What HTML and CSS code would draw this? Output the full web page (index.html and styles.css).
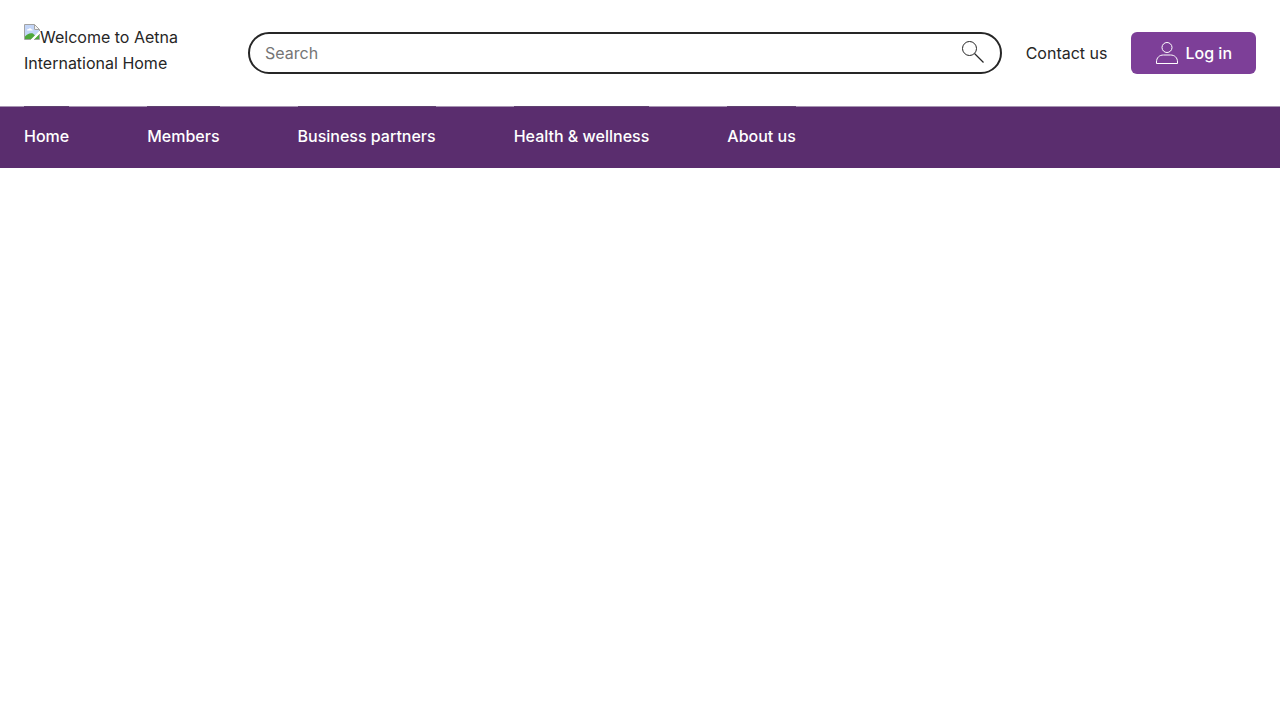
FILE: index.html
```html
<!DOCTYPE html>
<html lang="en">
<head>
    <meta charset="UTF-8">
    <meta name="viewport" content="width=device-width, initial-scale=1.0">
    <title>Aetna International</title>
    <link rel="stylesheet" href="styles.css">
</head>
<body>
    <header class="header">
        <a class="logo" href="#"><svg class="logo-icon" width="16" height="16" viewBox="0 0 16 16" aria-hidden="true">
                <path d="M.5.5h10l5 5v10H.5z" fill="#fff"/>
                <path d="M1 1h9v5h5v1.500L8 15H1z" fill="#c3d5f7"/>
                <path d="M3 6.500c0-1 .8-1.500 1.600-1.400C5 4 7 4 7.300 5.300c1 0 1.400.5 1.400 1.200z" fill="#fff"/>
                <path d="M1 15v-2.500C3 10 6 8.500 9 9.500l2 2L7.500 15z" fill="#4ea83b"/>
                <path d="M15 10v5h-5z" fill="#4ea83b"/>
                <path d="M16 6.500v3L9.500 16h-3z" fill="#fff"/>
                <path d="M10.500.5v5h5z" fill="#f4f4f4"/>
                <path d="M7 15.500H.5V.5h10l5 5v1.500M10.500.5v5h5M15.500 10v5.500H10" fill="none" stroke="#a3a3a3"/>
            </svg>Welcome to Aetna International Home</a>

        <form class="search" role="search">
            <input class="search-input" type="search" placeholder="Search" aria-label="Search">
            <button class="search-button" type="button" aria-label="Submit search">
                <svg width="24" height="24" viewBox="0 0 24 24" fill="none" stroke="#262626" aria-hidden="true">
                    <circle cx="8.500" cy="8.500" r="7" stroke-width="1"/>
                    <path d="M13.500 13.500 22.500 22.500" stroke-width="1.200"/>
                </svg>
            </button>
        </form>

        <a class="contact" href="#">Contact us</a>

        <button class="login" type="button">
            <svg width="24" height="24" viewBox="0 0 24 24" fill="none" stroke="#fff" stroke-width="1" aria-hidden="true">
                <circle cx="12" cy="6.500" r="5"/>
                <path d="M1.500 22.500v-1.500c0-4.500 3-7 7-7h7c4 0 7 2.500 7 7v1.500z" stroke-linejoin="round"/>
            </svg>
            Log in
        </button>
    </header>

    <nav class="nav" aria-label="Main">
        <ul class="nav-list">
            <li><a class="nav-link" href="#">Home</a></li>
            <li><a class="nav-link" href="#">Members</a></li>
            <li><a class="nav-link" href="#">Business partners</a></li>
            <li><a class="nav-link" href="#">Health &amp; wellness</a></li>
            <li><a class="nav-link" href="#">About us</a></li>
        </ul>
    </nav>
</body>
</html>
```
FILE: styles.css
```css
* {
    box-sizing: border-box;
}
body {
    margin: 0;
    font-family: Inter, "Liberation Sans", sans-serif;
    font-size: 16px;
    line-height: 26px;
    color: #262626;
    background: #fff;
}
a {
    color: inherit;
    text-decoration: none;
}
.header {
    display: flex;
    align-items: center;
    gap: 24px;
    padding: 24px 24px 30px;
}
.logo {
    flex: 0 0 200px;
    padding-right: 24px;
}
.logo-icon {
    vertical-align: 3px;
}
.search {
    flex: 1;
    display: flex;
    align-items: center;
    height: 42px;
    margin-top: 5px;
    padding: 0 15px;
    border: 2px solid #262626;
    border-radius: 21px;
}
.search-input {
    flex: 1;
    min-width: 0;
    padding: 0;
    border: 0;
    outline: 0;
    background: none;
    font: inherit;
    color: inherit;
}
.search-input::placeholder {
    color: #757575;
}
.search-button {
    display: flex;
    padding: 0 0 2px;
    border: 0;
    background: none;
    cursor: pointer;
}
.contact {
    margin-top: 5px;
}
.login {
    display: flex;
    align-items: center;
    gap: 6px;
    height: 42px;
    margin-top: 5px;
    padding: 0 24px;
    border: 0;
    border-radius: 6px;
    background: #7d3f98;
    color: #fff;
    font: inherit;
    font-weight: 500;
    cursor: pointer;
}
.nav {
    padding: 0 24px;
    border-top: 1px solid #a794b2;
    background: #5a2d6e;
    color: #fff;
}
.nav-list {
    display: flex;
    gap: 78px;
    margin: 0;
    padding: 0;
    list-style: none;
}
.nav-link {
    display: block;
    margin-top: -1px;
    padding: 16px 0 19px;
    border-top: 1px solid #5f4170;
    font-weight: 500;
}
```
